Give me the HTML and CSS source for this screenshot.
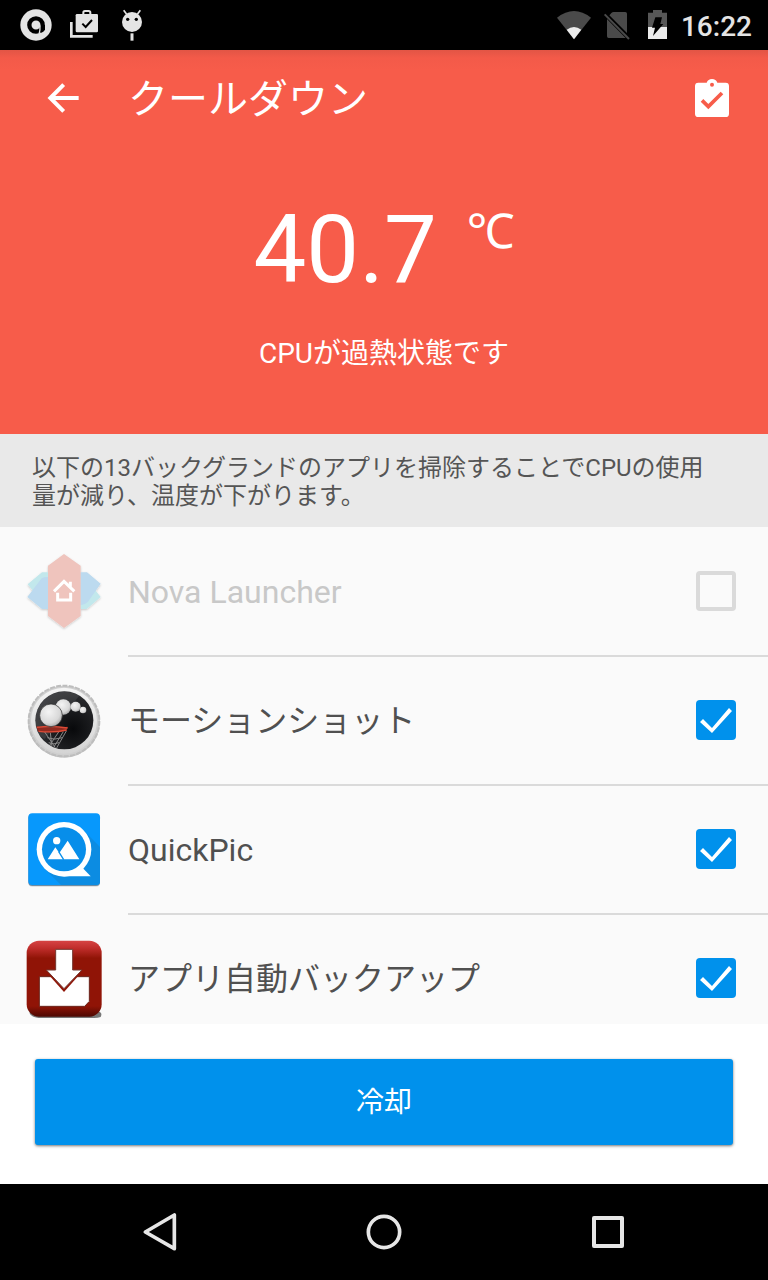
FILE: index.html
```html
<!DOCTYPE html>
<html lang="ja">
<head>
<meta charset="utf-8">
<meta name="viewport" content="width=device-width, initial-scale=1">
<title>クールダウン</title>
<link rel="stylesheet" href="styles.css">
</head>
<body>
<div class="screen">
  <div class="status-bar">
    <div class="status-group">
      <svg class="status-icon" viewBox="36 0 144 150" aria-hidden="true">
        <circle cx="108" cy="75" r="47" fill="#e4e4e4"/>
        <circle cx="108" cy="75" r="20" fill="none" stroke="#000" stroke-width="13"/>
        <path d="M122 75h13v13q-2 8-13 11z" fill="#000"/>
        <path d="M120 76q1 12-3 27" fill="none" stroke="#e4e4e4" stroke-width="4"/>
      </svg>
      <svg class="status-icon" viewBox="180 0 144 150" aria-hidden="true">
        <path d="M214 66v43h64" fill="none" stroke="#e4e4e4" stroke-width="8"/>
        <rect x="227" y="42" width="67" height="55" rx="4" fill="#e4e4e4"/>
        <path d="M250 44v-6q0-5 5-5h11q5 0 5 5v6" fill="none" stroke="#e4e4e4" stroke-width="6"/>
        <path d="M247 71l10 10 19-21" fill="none" stroke="#000" stroke-width="6"/>
      </svg>
      <svg class="status-icon" viewBox="324 0 144 150" aria-hidden="true">
        <circle cx="396" cy="66" r="30" fill="#e4e4e4"/>
        <path d="M371 31l9 12M421 31l-9 12" stroke="#e4e4e4" stroke-width="5"/>
        <path d="M396 100v22" stroke="#e4e4e4" stroke-width="9"/>
        <circle cx="383" cy="58" r="5" fill="#000"/><circle cx="409" cy="58" r="5" fill="#000"/>
      </svg>
    </div>
    <div class="status-group">
      <svg class="status-icon" viewBox="36 0 144 150" aria-hidden="true">
        <path d="M51 53q51-40 102 0l-51 65z" fill="#4a4a4a"/>
        <path d="M80 89q22-16 44 0l-22 29z" fill="#ececec"/>
      </svg>
      <svg class="status-icon sim" viewBox="180 0 108 150" aria-hidden="true">
        <path d="M214 39q3-3 7-3h35q5 0 5 5v61L207 47zM201 57l56 57h-51q-5 0-5-5z" fill="#4a4a4a"/>
        <path d="M198 39l73 74" stroke="#000" stroke-width="5"/>
        <path d="M194 43l73 74" stroke="#4a4a4a" stroke-width="6"/>
      </svg>
      <svg class="status-icon battery" viewBox="288 0 120 150" aria-hidden="true">
        <path d="M324 38h15v-8h27v8h15v43h-57z" fill="#575757"/>
        <path d="M324 81h57v36h-57z" fill="#ececec"/>
        <path d="M346 52h20l-5 20h9l-31 36 6-25h-9z" fill="#000"/>
      </svg>
      <time class="clock">16:22</time>
    </div>
  </div>

  <header class="hero">
    <div class="toolbar">
      <button class="icon-button" type="button" aria-label="戻る">
        <svg viewBox="60 42 144 144"><path d="M176 114H92M131 74L91 114l40 40" fill="none" stroke="#fff" stroke-width="12"/></svg>
      </button>
      <h1 class="title">クールダウン</h1>
      <button class="icon-button" type="button" aria-label="チェックリスト">
        <svg viewBox="444 222 144 144">
          <path d="M475 248h25q4-11 16-11t16 11h25q10 0 10 10v83q0 10-10 10h-82q-10 0-10-10v-83q0-10 10-10z" fill="#fff"/>
          <circle cx="516" cy="254" r="6" fill="#f75c4a"/>
          <path d="M486 301l19 19 41-41" fill="none" stroke="#f75c4a" stroke-width="11"/>
        </svg>
      </button>
    </div>
    <div class="temperature"><span class="degrees">40.7</span><span class="unit">℃</span></div>
    <p class="message">CPUが過熱状態です</p>
  </header>

  <p class="notice">以下の13バックグランドのアプリを掃除することでCPUの使用量が減り、温度が下がります。</p>

  <ul class="apps">
    <li class="app">
      <svg class="app-icon" viewBox="42 31 240 240" aria-hidden="true">
        <defs><filter id="soft" x="-20%" y="-20%" width="140%" height="150%"><feDropShadow dx="0" dy="3" stdDeviation="3" flood-opacity=".2"/></filter></defs>
        <g filter="url(#soft)">
          <path d="M53 131l43-36h18v72H82zM272 169l-42 36h-19v-73h32z" fill="#c2e8ec"/>
          <path d="M52 169l43-56q5-4 19-4v96H96zM211 95h20l41 34-38 54q-8 9-23 11z" fill="#bcdaef"/>
          <path d="M114 75l48-35 50 35v151l-50 36-48-36z" fill="#efc4bd"/>
        </g>
        <path d="M132 152l30-30 31 30M181 140v-17M143 156v22h39v-22" fill="none" stroke="#fff" stroke-width="9"/>
      </svg>
      <label class="app-name disabled" for="app-1">Nova Launcher</label>
      <input class="check" type="checkbox" id="app-1">
    </li>
    <li class="app">
      <svg class="app-icon" viewBox="42 28 240 240" aria-hidden="true">
        <defs>
          <linearGradient id="rim" x1="0" y1="0" x2="0" y2="1"><stop offset="0" stop-color="#f5f5f5"/><stop offset="1" stop-color="#d4d4d4"/></linearGradient>
          <radialGradient id="ball" cx=".4" cy=".35" r=".7"><stop offset="0" stop-color="#f4f4f4"/><stop offset=".7" stop-color="#d8d8d8"/><stop offset="1" stop-color="#a6a6a6"/></radialGradient>
          <radialGradient id="court" cx=".65" cy=".65" r=".7"><stop offset="0" stop-color="#08090b"/><stop offset="1" stop-color="#303134"/></radialGradient>
          <clipPath id="disc"><circle cx="163" cy="149" r="86"/></clipPath>
        </defs>
        <circle cx="162" cy="153" r="108" fill="#c4c4c4"/>
        <circle cx="162" cy="151" r="106" fill="#cfcfcf" stroke="#bdbdbd" stroke-width="6" stroke-dasharray="15 4"/>
        <circle cx="162" cy="150" r="99" fill="url(#rim)"/>
        <circle cx="163" cy="149" r="87" fill="url(#court)"/>
        <g clip-path="url(#disc)">
          <path d="M70 55h154L104 205 70 180z" fill="#fff" opacity=".09"/>
          <path d="M104 184l34 50M121 186l5 44M146 184l-27 40M160 183l-34 55M169 181l-31 54M112 201q20 9 45 0M116 216q16 7 31 0" fill="none" stroke="#888" stroke-width="3"/>
          <path d="M77 167q45 7 96 1l-4 12q-40 8-87 2z" fill="#8f2a20"/>
          <path d="M80 170q48-6 93 2M86 182q46 5 84-4" fill="none" stroke="#dd4a36" stroke-width="4"/>
        </g>
        <circle cx="219" cy="118" r="10" fill="url(#ball)"/>
        <circle cx="197" cy="108" r="15" fill="url(#ball)"/>
        <circle cx="160" cy="109" r="23" fill="url(#ball)"/>
        <circle cx="123" cy="134" r="34" fill="url(#ball)" stroke="#252525" stroke-width="2"/>
      </svg>
      <label class="app-name" for="app-2">モーションショット</label>
      <input class="check" type="checkbox" id="app-2" checked>
    </li>
    <li class="app">
      <svg class="app-icon" viewBox="42 26 240 240" aria-hidden="true">
        <rect x="55" y="44" width="215" height="215" rx="12" fill="#000" opacity=".12"/>
        <rect x="55" y="42" width="215" height="215" rx="12" fill="#6f8da3"/>
        <rect x="55" y="39" width="215" height="215" rx="12" fill="#0798fc"/>
        <path d="M219 88l51 52v102q0 12-12 12H153l-51-50z" fill="#0c8ce2"/>
        <path d="M162 228h80l-24-25z" fill="#fff"/>
        <circle cx="162" cy="147" r="82" fill="#fff"/>
        <circle cx="162" cy="147" r="66" fill="#078eea"/>
        <circle cx="140" cy="121" r="11" fill="#fff"/>
        <path d="M113 177l23-36 12 17 25-37 35 56z" fill="#fff"/>
        <path d="M146 154l15 24" stroke="#078eea" stroke-width="4"/>
      </svg>
      <label class="app-name" for="app-3">QuickPic</label>
      <input class="check" type="checkbox" id="app-3" checked>
    </li>
    <li class="app">
      <svg class="app-icon" viewBox="42 38 240 240" aria-hidden="true">
        <defs><linearGradient id="red" x1="0" y1="0" x2="0" y2="1"><stop offset="0" stop-color="#d64444"/><stop offset=".1" stop-color="#c02d2b"/><stop offset=".23" stop-color="#901406"/><stop offset=".86" stop-color="#901406"/><stop offset="1" stop-color="#4d0802"/></linearGradient></defs>
        <path d="M65 258h200q14 5 7 17-8 3-20 3H86q-23-3-28-16z" fill="#777"/>
        <rect x="50" y="46" width="225" height="228" rx="37" fill="url(#red)"/>
        <path d="M88 154h150v74l-14 15H88z" fill="#fff" stroke="#69251c" stroke-width="3"/>
        <path d="M108 139h108l-54 61z" fill="#901406"/>
        <path d="M137 72h51v62h28l-54 56-53-56h28z" fill="#fff" stroke="#74372f" stroke-width="3"/>
      </svg>
      <label class="app-name" for="app-4">アプリ自動バックアップ</label>
      <input class="check" type="checkbox" id="app-4" checked>
    </li>
  </ul>

  <div class="action"><button class="cool-button" type="button">冷却</button></div>

  <nav class="nav-bar" aria-label="システム">
    <button class="nav-button" type="button" aria-label="戻る"><svg viewBox="408 504 144 144"><path d="M523 525v101l-87-50z" fill="none" stroke="#e6e6e6" stroke-width="11" stroke-linejoin="round"/></svg></button>
    <button class="nav-button" type="button" aria-label="ホーム"><svg viewBox="1080 504 144 144"><circle cx="1152" cy="576" r="47" fill="none" stroke="#e6e6e6" stroke-width="11"/></svg></button>
    <button class="nav-button" type="button" aria-label="履歴"><svg viewBox="72 504 144 144"><rect x="102" y="534" width="84" height="84" fill="none" stroke="#e6e6e6" stroke-width="12" stroke-linejoin="round"/></svg></button>
  </nav>
</div>
</body>
</html>
```
FILE: styles.css
```css
* { box-sizing: border-box; }

body {
  margin: 0;
  font-family: Roboto, "Noto Sans CJK JP", sans-serif;
  background: #fff;
}

button {
  border: 0;
  padding: 0;
  background: none;
  font: inherit;
  cursor: pointer;
}

.screen {
  display: flex;
  flex-direction: column;
  height: 100vh;
}

.status-bar {
  display: flex;
  flex: none;
  justify-content: space-between;
  height: 50px;
  padding: 0 16px 0 12px;
  background: #000;
}

.status-group { display: flex; }
.status-icon { display: block; width: 48px; height: 50px; }
.sim { width: 36px; }
.battery { width: 40px; }

.clock {
  padding-left: 5px;
  color: #e4e4e4;
  font-size: 28px;
  font-weight: 500;
  line-height: 54px;
}

.hero {
  flex: none;
  padding-bottom: 64px;
  color: #fff;
  background: linear-gradient(#e25545, #f35a49 8px, #f75c4a 20px);
}

.toolbar {
  display: flex;
  align-items: center;
  height: 96px;
  padding: 0 32px 0 40px;
}

.icon-button { width: 48px; height: 48px; }
.icon-button svg { display: block; width: 48px; height: 48px; }

.title {
  flex: 1;
  margin: 0;
  padding: 4px 0 0 40px;
  font-size: 40px;
  font-weight: 400;
  line-height: 48px;
}

.temperature {
  display: flex;
  justify-content: center;
  margin-top: 48px;
}

.degrees { font-size: 94px; line-height: 112px; }

.unit {
  padding-left: 30px;
  font-family: "Noto Sans", sans-serif;
  font-size: 48px;
  line-height: 72px;
}

.message {
  margin: 32px 0 0;
  font-size: 28px;
  line-height: 32px;
  text-align: center;
}

.notice {
  flex: none;
  margin: 0;
  padding: 20px 48px 17px 32px;
  color: #555;
  background: #e9e9e9;
  font-size: 24px;
  line-height: 28px;
}

.apps {
  flex: 1;
  min-height: 0;
  margin: 0;
  padding: 1px 0 0;
  overflow: hidden;
  list-style: none;
  background: #fafafa;
}

.app {
  display: grid;
  grid-template-columns: 104px 1fr 40px;
  align-items: center;
  height: 129px;
  padding: 0 32px 3px 24px;
  background: linear-gradient(#dadada, #dadada) 128px 100% / 100% 2px no-repeat;
}

.app-icon { display: block; width: 80px; height: 80px; }

.app-name {
  padding-top: 2px;
  color: #505050;
  font-size: 32px;
  line-height: 40px;
}

.app-name.disabled { color: #c8c8c8; }

.check {
  width: 40px;
  height: 40px;
  margin: 0;
  border: 4px solid #dadada;
  border-radius: 4px;
  appearance: none;
}

.check:checked { border: 0; background: #0091ec; }

.check:checked::before {
  content: "";
  display: block;
  width: 40px;
  height: 40px;
  background: #fff;
  clip-path: polygon(4px 22px, 7px 19px, 16px 28px, 33px 8px, 36px 11px, 16px 33px);
}

.action { flex: none; padding: 35px 35px 39px; background: #fff; }

.cool-button {
  display: block;
  width: 100%;
  height: 86px;
  padding-bottom: 4px;
  border-radius: 3px;
  color: #fff;
  background: #0091ec;
  box-shadow: 0 1px 3px rgba(0, 0, 0, .55);
  font-size: 28px;
}

.nav-bar {
  display: flex;
  flex: none;
  height: 96px;
  padding: 0 48px;
  background: #000;
}

.nav-button { flex: 1; }
.nav-button svg { display: block; width: 48px; height: 48px; margin: 0 auto; }
```
